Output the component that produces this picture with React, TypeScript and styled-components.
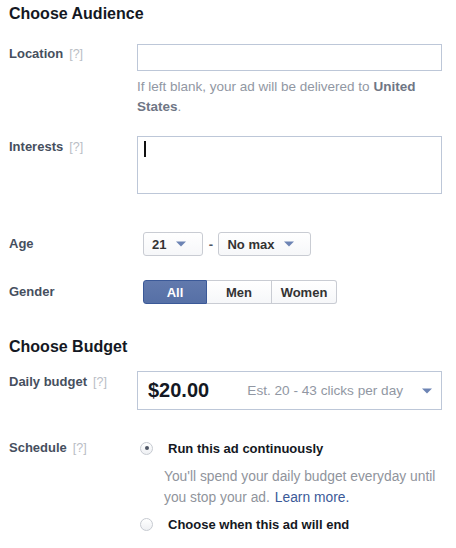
import React from "react";
import styled, { createGlobalStyle } from "styled-components";

const Global = createGlobalStyle`
  html, body { margin: 0; padding: 0; background: #fff; }
  body { font-family: "Liberation Sans", Arial, Helvetica, sans-serif; -webkit-font-smoothing: antialiased; }
`;

const Page = styled.div`
  width: 456px;
  padding: 4px 14px 0 9px;
  box-sizing: border-box;
`;

const Heading = styled.h2<{ $top: number }>`
  margin: ${(p) => p.$top}px 0 0;
  font-size: 16px;
  line-height: 20px;
  font-weight: bold;
  color: #141823;
`;

const Row = styled.div<{ $top: number; $center?: boolean }>`
  display: flex;
  align-items: ${(p) => (p.$center ? "center" : "flex-start")};
  margin-top: ${(p) => p.$top}px;
`;

const Label = styled.div<{ $pad?: number }>`
  width: 128px;
  flex: none;
  padding-top: ${(p) => p.$pad ?? 0}px;
  font-size: 13px;
  line-height: 16px;
  font-weight: bold;
  color: #464f5e;
`;

const Help = styled.span`
  font-weight: normal;
  color: #b9bdc5;
  font-size: 12.5px;
  margin-left: 6px;
`;

const Content = styled.div<{ $indent?: number }>`
  flex: 1;
  min-width: 0;
  padding-left: ${(p) => p.$indent ?? 0}px;
`;

const TextBox = styled.div<{ $h: number }>`
  height: ${(p) => p.$h}px;
  box-sizing: border-box;
  border: 1px solid #bdc7d8;
  background: #fff;
  position: relative;
`;

const Caret = styled.span`
  position: absolute;
  left: 6px;
  top: 4px;
  width: 1.5px;
  height: 16px;
  background: #111;
`;

const Hint = styled.div`
  margin-top: 6px;
  font-size: 13.5px;
  line-height: 20px;
  color: #9197a3;
  b { color: #6f7685; }
`;

const Dropdowns = styled.div`
  display: flex;
  align-items: center;
`;

const Select = styled.div`
  display: flex;
  align-items: center;
  height: 24px;
  box-sizing: border-box;
  padding: 0 16px 0 8px;
  border: 1px solid #c9ccd3;
  border-radius: 3px;
  background: linear-gradient(#fff, #f6f7f9);
  font-size: 13px;
  font-weight: bold;
  color: #333;
  gap: 10px;
`;

const Dash = styled.span`
  width: 15px;
  text-align: center;
  font-size: 13px;
  font-weight: bold;
  color: #4e5665;
`;

const Arrow = ({ w = 10 }: { w?: number }) => (
  <svg width={w} height={6} viewBox="0 0 10 6" style={{ display: "block" }}>
    <path d="M0 0.5 H10 L5 5.5 Z" fill="#6d84b4" />
  </svg>
);

const Segmented = styled.div`
  display: flex;
  height: 24px;
`;

const Segment = styled.div<{ $active?: boolean; $w: number; $first?: boolean; $last?: boolean }>`
  width: ${(p) => p.$w}px;
  box-sizing: border-box;
  display: flex;
  align-items: center;
  justify-content: center;
  font-size: 13px;
  font-weight: bold;
  border: 1px solid ${(p) => (p.$active ? "#3b5998" : "#c9ccd3")};
  border-left-width: ${(p) => (p.$first ? 1 : 0)}px;
  border-radius: ${(p) => (p.$first ? "3px 0 0 3px" : p.$last ? "0 3px 3px 0" : "0")};
  background: ${(p) => (p.$active ? "linear-gradient(#6179ad, #5670a6)" : "linear-gradient(#fff, #f6f7f9)")};
  color: ${(p) => (p.$active ? "#fff" : "#333")};
`;

const Budget = styled.div`
  height: 39px;
  box-sizing: border-box;
  border: 1px solid #bdc7d8;
  display: flex;
  align-items: center;
  padding: 0 9px 0 10px;
`;

const Amount = styled.span`
  font-size: 20px;
  font-weight: bold;
  color: #141823;
  flex: 1;
`;

const Est = styled.span`
  font-size: 13.6px;
  color: #9197a3;
  margin-right: 19px;
`;

const RadioLine = styled.div<{ $top: number }>`
  display: flex;
  align-items: center;
  height: 20px;
  margin-top: ${(p) => p.$top}px;
`;

const Radio = styled.span<{ $on?: boolean }>`
  width: 13px;
  height: 13px;
  box-sizing: border-box;
  border-radius: 50%;
  border: 1px solid #c6cad1;
  background: linear-gradient(#fff, #eef0f3);
  margin: 0 15px 0 3px;
  display: flex;
  align-items: center;
  justify-content: center;
  &::after {
    content: "";
    width: 4px;
    height: 4px;
    border-radius: 50%;
    background: ${(p) => (p.$on ? "#4e5665" : "transparent")};
  }
`;

const RadioText = styled.span`
  font-size: 13px;
  font-weight: bold;
  color: #141823;
`;

const Desc = styled.div`
  margin: 8px 0 0 27px;
  font-size: 13.8px;
  line-height: 21px;
  color: #90949c;
  a { color: #3b5998; text-decoration: none; margin-left: 5px; }
`;

export default function App() {
  return (
    <>
      <Global />
      <Page>
        <Heading $top={0}>Choose Audience</Heading>

        <Row $top={20}>
          <Label $pad={2}>
            Location<Help>[?]</Help>
          </Label>
          <Content>
            <TextBox $h={27} />
            <Hint>
              If left blank, your ad will be delivered to <b>United</b>
              <br />
              <b>States</b>.
            </Hint>
          </Content>
        </Row>

        <Row $top={19}>
          <Label $pad={3}>
            Interests<Help>[?]</Help>
          </Label>
          <Content>
            <TextBox $h={58}>
              <Caret />
            </TextBox>
          </Content>
        </Row>

        <Row $top={38} $center>
          <Label>Age</Label>
          <Content $indent={6}>
            <Dropdowns>
              <Select>
                21 <Arrow />
              </Select>
              <Dash>-</Dash>
              <Select>
                No max <Arrow />
              </Select>
            </Dropdowns>
          </Content>
        </Row>

        <Row $top={24} $center>
          <Label>Gender</Label>
          <Content $indent={6}>
            <Segmented>
              <Segment $w={64} $active $first>
                All
              </Segment>
              <Segment $w={65}>Men</Segment>
              <Segment $w={65} $last>
                Women
              </Segment>
            </Segmented>
          </Content>
        </Row>

        <Heading $top={33}>Choose Budget</Heading>

        <Row $top={14}>
          <Label $pad={3}>
            Daily budget<Help>[?]</Help>
          </Label>
          <Content>
            <Budget>
              <Amount>$20.00</Amount>
              <Est>Est. 20 - 43 clicks per day</Est>
              <Arrow />
            </Budget>
          </Content>
        </Row>

        <Row $top={28}>
          <Label $pad={2}>
            Schedule<Help>[?]</Help>
          </Label>
          <Content>
            <RadioLine $top={0}>
              <Radio $on />
              <RadioText>Run this ad continuously</RadioText>
            </RadioLine>
            <Desc>
              You'll spend your daily budget everyday until
              <br />
              you stop your ad.<a href="#">Learn more.</a>
            </Desc>
            <RadioLine $top={6}>
              <Radio />
              <RadioText>Choose when this ad will end</RadioText>
            </RadioLine>
          </Content>
        </Row>
      </Page>
    </>
  );
}
